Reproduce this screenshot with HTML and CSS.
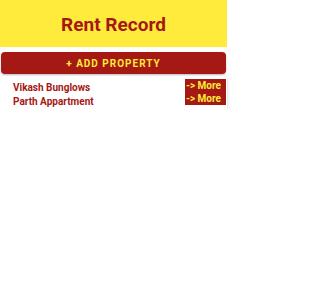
FILE: index.html
```html
<!DOCTYPE html>
<html>
<head>
<meta charset="utf-8">
<link rel="stylesheet" href="styles.css">
</head>
<body>
<div class="page">
  <header class="top">
    <h1 class="title">Rent Record</h1>
  </header>
  <button class="add">+ ADD PROPERTY</button>
  <div class="card">
    <div class="names">
      <div class="name">Vikash Bunglows</div>
      <div class="name">Parth Appartment</div>
    </div>
    <div class="mores">
      <div class="more">-&gt; More</div>
      <div class="more">-&gt; More</div>
    </div>
  </div>
</div>
</body>
</html>
```
FILE: styles.css
```css
html, body {
  margin: 0;
  padding: 0;
  background: #ffffff;
  font-family: Roboto, "Liberation Sans", sans-serif;
}
.page {
  width: 227px;
}
.top {
  height: 47px;
  background: #ffeb3b;
  display: flex;
  align-items: center;
  justify-content: center;
}
.title {
  margin: 0;
  font-size: 19px;
  font-weight: 700;
  color: #a51814;
  padding-top: 1px;
}
.add {
  display: block;
  box-sizing: border-box;
  width: calc(100% - 2px);
  height: 22px;
  margin: 5px 1px 0 1px;
  border: none;
  border-radius: 4px;
  background: #a51814;
  color: #ffeb3b;
  font-family: Roboto, "Liberation Sans", sans-serif;
  font-size: 10px;
  font-weight: 700;
  letter-spacing: 1px;
  padding: 1px 0 0 0;
  box-shadow: 0 1px 2px rgba(0,0,0,0.25);
}
.card {
  margin-top: 2px;
  display: flex;
  justify-content: space-between;
  align-items: flex-start;
  padding: 3px 1px 1px 13px;
  background: #fff;
  box-shadow: 0 2px 4px rgba(0,0,0,0.18);
}
.names {
  padding-top: 2px;
}
.name {
  font-size: 10px;
  font-weight: 700;
  color: #a51814;
  line-height: 13.5px;
}
.mores {
  display: flex;
  flex-direction: column;
  width: 41px;
  background: #a51814;
}
.more {
  font-size: 10px;
  font-weight: 700;
  color: #ffeb3b;
  line-height: 13px;
  padding-left: 1px;
  white-space: nowrap;
}
```
